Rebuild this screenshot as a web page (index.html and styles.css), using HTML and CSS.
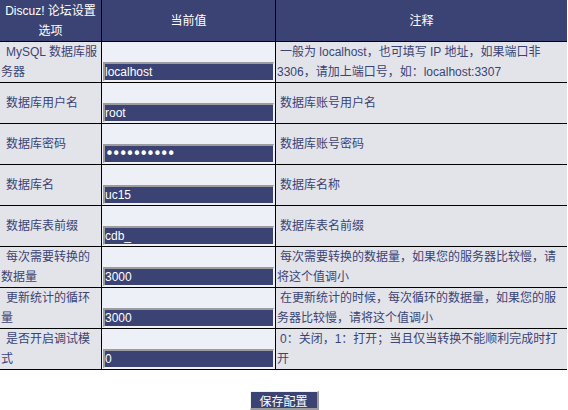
FILE: index.html
```html
<!DOCTYPE html>
<html lang="zh-CN">
<head>
<meta charset="utf-8">
<title>Discuz! 论坛设置</title>
<link rel="stylesheet" href="styles.css">
</head>
<body>
<div class="grid">
  <div class="head">Discuz! 论坛设置选项</div>
  <div class="head">当前值</div>
  <div class="head">注释</div>

  <div class="label"><span>MySQL 数据库服务器</span></div>
  <div class="value"><input class="field" type="text" value="localhost"></div>
  <div class="note"><span>一般为 localhost，也可填写 IP 地址，如果端口非3306，请加上端口号，如：localhost:3307</span></div>

  <div class="label"><span>数据库用户名</span></div>
  <div class="value"><input class="field" type="text" value="root"></div>
  <div class="note"><span>数据库账号用户名</span></div>

  <div class="label"><span>数据库密码</span></div>
  <div class="value"><input class="field pass" type="password" value="abcdefghij"></div>
  <div class="note"><span>数据库账号密码</span></div>

  <div class="label"><span>数据库名</span></div>
  <div class="value"><input class="field" type="text" value="uc15"></div>
  <div class="note"><span>数据库名称</span></div>

  <div class="label"><span>数据库表前缀</span></div>
  <div class="value"><input class="field" type="text" value="cdb_"></div>
  <div class="note"><span>数据库表名前缀</span></div>

  <div class="label"><span>每次需要转换的数据量</span></div>
  <div class="value"><input class="field" type="text" value="3000"></div>
  <div class="note"><span>每次需要转换的数据量，如果您的服务器比较慢，请将这个值调小</span></div>

  <div class="label"><span>更新统计的循环量</span></div>
  <div class="value"><input class="field" type="text" value="3000"></div>
  <div class="note"><span>在更新统计的时候，每次循环的数据量，如果您的服务器比较慢，请将这个值调小</span></div>

  <div class="label"><span>是否开启调试模式</span></div>
  <div class="value"><input class="field" type="text" value="0"></div>
  <div class="note"><span>0：关闭，1：打开；当且仅当转换不能顺利完成时打开</span></div>
</div>
<div class="actions">
  <button class="save" type="button">保存配置</button>
</div>
</body>
</html>
```

FILE: styles.css
```css
html, body {
  margin: 0;
  padding: 0;
  background: #ffffff;
}

body {
  font-family: "Liberation Sans", "Noto Sans CJK SC", sans-serif;
  font-size: 12px;
  line-height: 20px;
  color: #3b4374;
}

.grid {
  display: grid;
  grid-template-columns: 101px 173px 291px;
  grid-template-rows: 41px repeat(8, 40px);
  gap: 1px;
  width: 567px;
  padding-bottom: 1px;
  background: #000000;
}

.head {
  background: #3b4374;
  color: #ffffff;
  display: flex;
  align-items: center;
  justify-content: center;
  text-align: center;
}

.label {
  background: #e3e4ea;
  display: flex;
  align-items: center;
  padding-left: 1px;
  text-indent: 5px;
}

.note {
  background: #e3e4ea;
  display: flex;
  align-items: center;
  padding: 0 3px 0 1px;
  text-indent: 3px;
}

.value {
  background: #eef0f8;
  display: flex;
  align-items: flex-end;
  padding: 0 0 1px 1px;
}

.field {
  box-sizing: border-box;
  width: 171px;
  height: 19px;
  margin: 0;
  padding: 0;
  background: #3b4374;
  color: #ffffff;
  font-family: "Liberation Sans", "Noto Sans CJK SC", sans-serif;
  font-size: 12px;
  border-style: solid;
  border-width: 2px 1px 1px 2px;
  border-color: #9c9c9c #f2f2f2 #f2f2f2 #9c9c9c;
  outline: none;
}

.field.pass {
  font-family: "DejaVu Sans", sans-serif;
  font-size: 15px;
  letter-spacing: -2px;
}

.actions {
  margin-top: 21px;
  text-align: center;
  line-height: 0;
}

.save {
  box-sizing: border-box;
  width: 69px;
  height: 19px;
  margin: 0;
  padding: 0;
  background: #3b4374;
  color: #ffffff;
  font-family: "Noto Sans CJK SC", sans-serif;
  font-size: 12px;
  line-height: 15px;
  border-style: solid;
  border-width: 1px 2px 2px 1px;
  border-color: #f0f0f0 #9c9c9c #9c9c9c #f0f0f0;
}
```
